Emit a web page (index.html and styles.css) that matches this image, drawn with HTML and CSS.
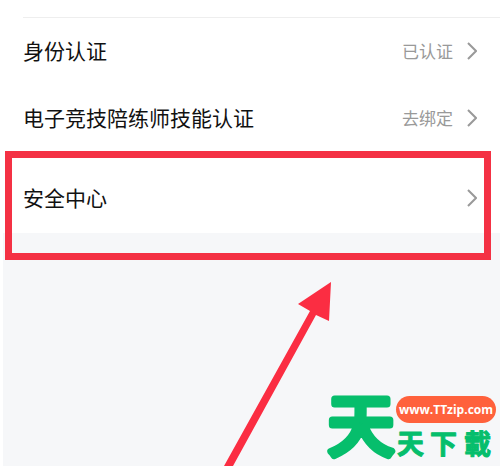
FILE: index.html
```
<!DOCTYPE html>
<html lang="zh-CN">
<head>
<meta charset="UTF-8">
<meta name="viewport" content="width=device-width, initial-scale=1.0">
<title>安全中心</title>
<link rel="stylesheet" href="styles.css">
</head>
<body>

<main class="page">
    <nav class="list">
        <a class="row" href="#identity">
            <span class="label">身份认证</span>
            <span class="status">已认证</span>
            <svg class="chevron" viewBox="0 0 10 18"><path d="M1 1l8 8-8 8"/></svg>
        </a>
        <a class="row" href="#skill">
            <span class="label">电子竞技陪练师技能认证</span>
            <span class="status">去绑定</span>
            <svg class="chevron" viewBox="0 0 10 18"><path d="M1 1l8 8-8 8"/></svg>
        </a>
    </nav>

    <section class="security">
        <a class="row row-security" href="#security">
            <span class="label">安全中心</span>
            <svg class="chevron" viewBox="0 0 10 18"><path d="M1 1l8 8-8 8"/></svg>
        </a>
        <div class="highlight"></div>
    </section>

    <svg class="arrow" viewBox="0 0 108 184">
        <path d="M0 184L86 29L74 22L107 0L105 39L92 33L9 184Z"/>
    </svg>

    <div class="brand">
        <svg class="brand-mark" viewBox="0 0 70 76">
            <text x="2" y="60">天</text>
        </svg>
        <div class="brand-side">
            <a class="brand-url" href="#home">www.TTzip.com</a>
            <svg class="brand-name" viewBox="0 0 100 34">
                <text x="1 34 68" y="25">天下載</text>
            </svg>
        </div>
    </div>
</main>

</body>
</html>
```
FILE: styles.css
```
body {
    margin: 0;
    background-color: #ffffff;
    font-family: "Noto Sans CJK SC", sans-serif;
}
.page {
    position: relative;
    min-height: 100vh;
    margin-left: 3px;
    background-color: #f6f7f9;
}
.list {
    padding-top: 17px;
    background-color: #ffffff;
}
.list::before {
    content: "";
    display: block;
    height: 1px;
    margin-left: 20px;
    background-color: #eeeeee;
}
.row {
    display: flex;
    align-items: center;
    box-sizing: border-box;
    height: 67px;
    padding: 0 23px 2px 20px;
    background-color: #ffffff;
    color: #111111;
    text-decoration: none;
}
.label {
    flex: 1;
    padding-bottom: 2px;
    font-size: 21px;
}
.status {
    margin-right: 14px;
    color: #999999;
    font-size: 17px;
}
.chevron {
    width: 10px;
    height: 18px;
    fill: none;
    stroke: #999999;
    stroke-width: 2;
}
.security {
    position: relative;
    height: 108px;
}
.row-security {
    height: 81px;
    padding-top: 12px;
}
/* red frame over the row */
.highlight {
    position: absolute;
    top: -1px;
    right: 9px;
    bottom: 0;
    left: 2px;
    border: 7px solid #f43144;
    pointer-events: none;
}
.arrow {
    position: absolute;
    bottom: 0;
    left: 221px;
    width: 108px;
    height: 184px;
    fill: #fb2d42;
}
.brand {
    position: absolute;
    right: 4px;
    bottom: 0;
    display: flex;
    align-items: flex-start;
    height: 76px;
    fill: #06be6c;
    stroke: #06be6c;
    stroke-linejoin: round;
}
.brand-mark {
    width: 70px;
    height: 76px;
    overflow: visible;
    font-size: 66px;
    stroke-width: 7px;
}
.brand-side {
    display: flex;
    flex-direction: column;
    padding-top: 6px;
}
.brand-url {
    width: 100px;
    height: 27px;
    border-radius: 14px;
    background-color: #ff613c;
    color: #ffffff;
    font-family: "Open Sans", sans-serif;
    font-size: 12px;
    font-weight: 700;
    line-height: 28px;
    text-align: center;
    text-decoration: none;
}
.brand-name {
    width: 100px;
    height: 34px;
    margin-top: 6px;
    overflow: visible;
    font-family: "Noto Sans CJK TC", sans-serif;
    font-size: 27px;
    font-weight: 700;
    stroke-width: 1px;
}
```
